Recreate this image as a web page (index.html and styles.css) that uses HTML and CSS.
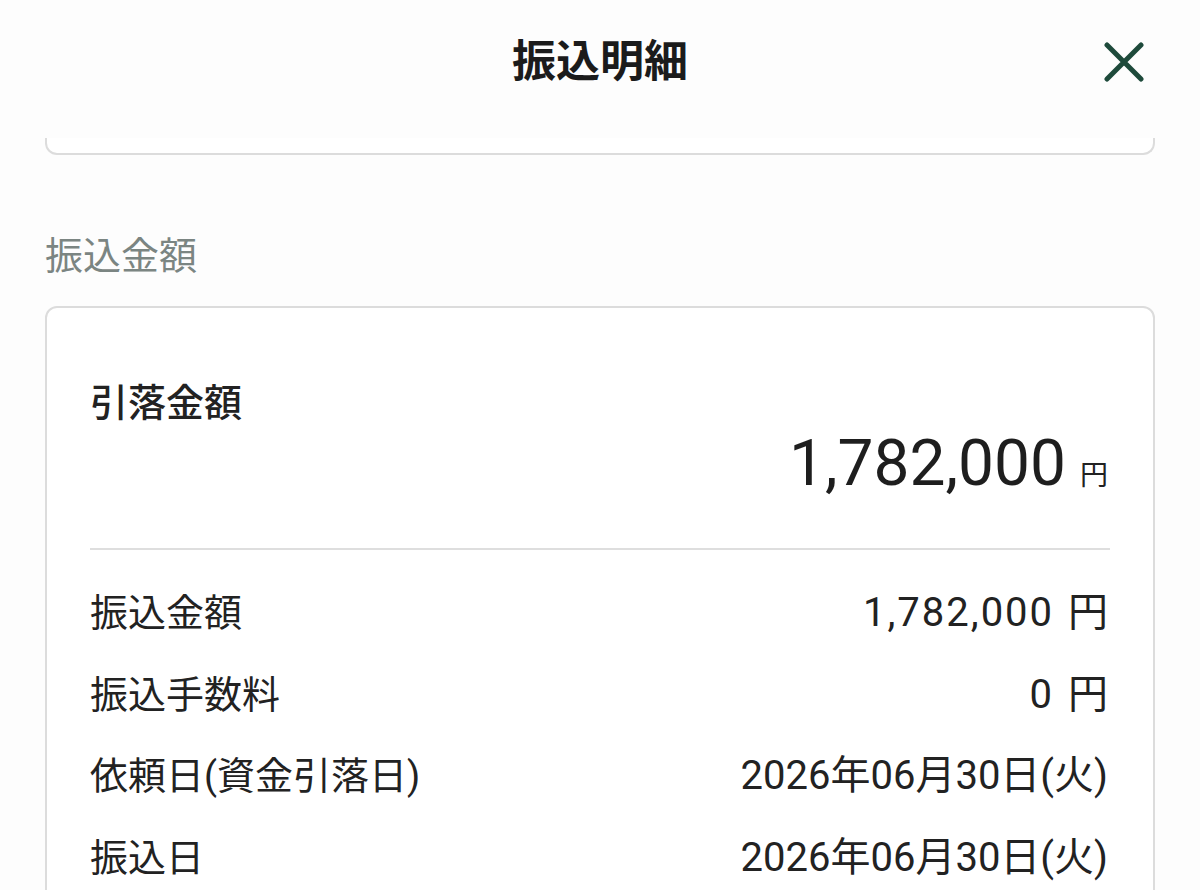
FILE: index.html
```html
<!DOCTYPE html>
<html lang="ja">
  <head>
    <meta charset="UTF-8" />
    <meta name="viewport" content="width=device-width, initial-scale=1.0" />
    <title>振込明細</title>
    <link rel="stylesheet" href="styles.css">
  </head>

  <body>
    <header class="sheet-header">
      <span></span>
      <h1 class="sheet-title">振込明細</h1>
      <button class="close-button" aria-label="閉じる">
        <svg width="40" height="40" viewBox="0 0 40 40">
          <path d="M3 3 L37 37 M37 3 L3 37" stroke="#1e4a3b" stroke-width="5" stroke-linecap="round" fill="none" />
        </svg>
      </button>
    </header>

    <main class="content">
      <!-- previous card, scrolled up under the header -->
      <div class="card card-tail"></div>

      <h2 class="section-label">振込金額</h2>
      <section class="card">
        <div class="card-inner">
          <h3 class="total-label">引落金額</h3>
          <div class="total-amount">
            <span class="total-value">1,782,000</span>
            <span class="total-unit">円</span>
          </div>
          <hr class="divider" />
          <dl class="detail-list">
            <div class="detail-row">
              <dt>振込金額</dt>
              <dd><span class="num">1,782,000</span> 円</dd>
            </div>
            <div class="detail-row">
              <dt>振込手数料</dt>
              <dd><span class="num">0</span> 円</dd>
            </div>
            <div class="detail-row">
              <dt>依頼日(資金引落日)</dt>
              <dd>2026年06月30日(火)</dd>
            </div>
            <div class="detail-row">
              <dt>振込日</dt>
              <dd>2026年06月30日(火)</dd>
            </div>
          </dl>
        </div>
      </section>
    </main>
  </body>
</html>
```

FILE: styles.css
```css
* {
  box-sizing: border-box;
}

body {
  margin: 0;
  background: #fdfdfd;
  color: #222;
  font-family: Roboto, "Noto Sans CJK JP", sans-serif;
  height: 890px;
  overflow: hidden;
}

.sheet-header {
  display: grid;
  grid-template-columns: 1fr auto 1fr;
  align-items: start;
  height: 138px;
  padding: 32px 56px 0;
  background: #fdfdfd;
}

.sheet-title {
  margin: 0;
  font-size: 44px;
  font-weight: 700;
  line-height: 60px;
  color: #1b1b1b;
}

.close-button {
  justify-self: end;
  margin-top: 10px;
  padding: 0;
  border: none;
  background: none;
  width: 40px;
  height: 40px;
  cursor: pointer;
}

.content {
  padding: 0 45px;
}

.card {
  background: #fff;
  border: 2px solid #dcdcdc;
  border-radius: 12px;
}

.card-tail {
  height: 17px;
  border-top: none;
  border-radius: 0 0 12px 12px;
}

.section-label {
  margin: 73px 0 22px;
  font-size: 38px;
  font-weight: 400;
  line-height: 56px;
  color: #7b8582;
}

.card-inner {
  padding: 67px 43px 40px;
}

.total-label {
  margin: 0;
  font-size: 38px;
  font-weight: 500;
  line-height: 56px;
}

.total-amount {
  display: flex;
  justify-content: flex-end;
  align-items: baseline;
  gap: 14px;
  line-height: 66px;
}

.total-value {
  font-size: 64px;
  font-weight: 400;
  color: #1e1e1e;
}

.total-unit {
  font-size: 28px;
  line-height: 1;
  margin-right: 2px;
}

.divider {
  margin: 51px 0 35px;
  border: none;
  border-top: 2px solid #dedede;
}

.detail-list {
  margin: 0;
  display: flex;
  flex-direction: column;
  gap: 25.7px;
}

.detail-row {
  display: flex;
  justify-content: space-between;
  font-size: 38px;
  line-height: 56px;
}

.detail-row dt,
.detail-row dd {
  margin: 0;
}

.detail-row dd {
  font-size: 40px;
  margin-right: 2px;
}

.num {
  letter-spacing: 2px;
  margin-right: 4px;
}
```
